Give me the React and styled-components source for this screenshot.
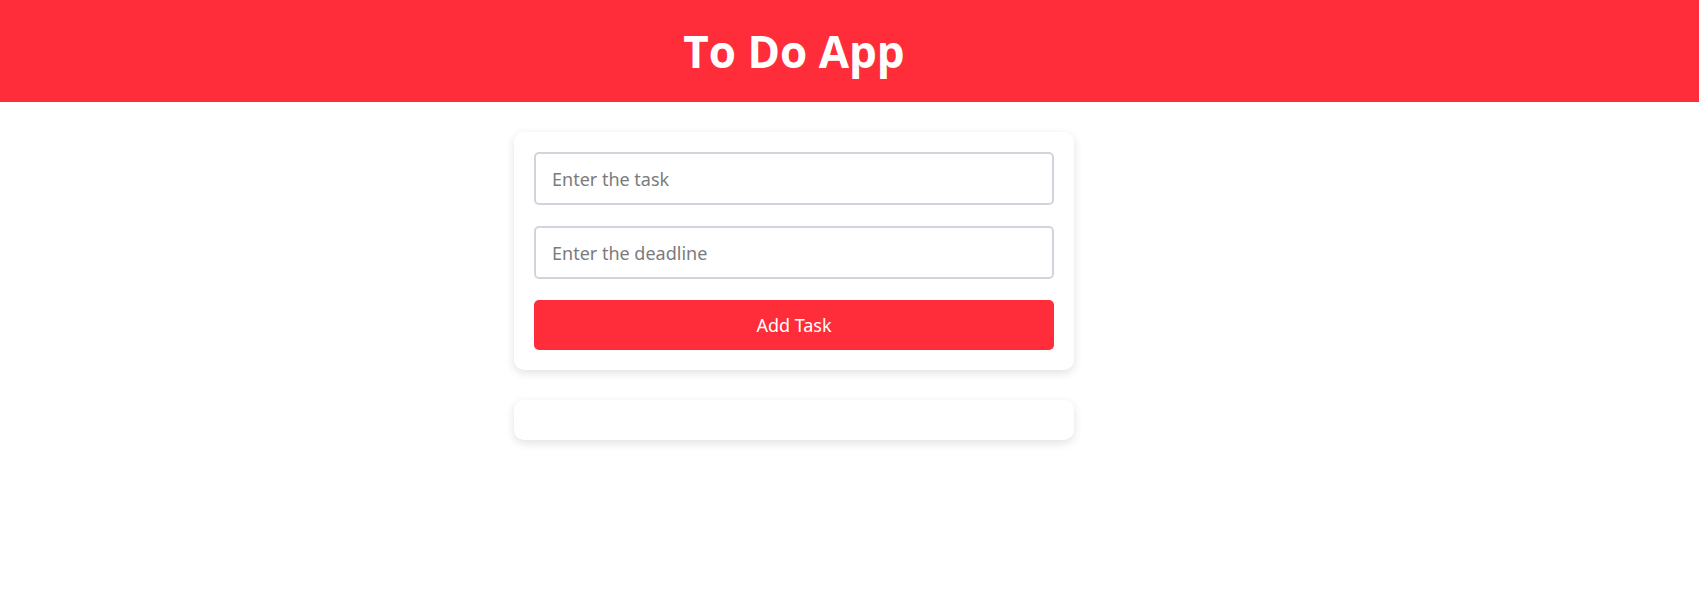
import React, { useState } from 'react';
import styled, { createGlobalStyle } from 'styled-components';

const GlobalStyle = createGlobalStyle`
  body {
    margin: 0;
    background: #ffffff;
    font-family: 'Noto Sans', 'Open Sans', sans-serif;
  }
`;

const Header = styled.header`
  background: #ff2d3a;
  height: 102px;
  padding-right: 111px;
  display: flex;
  align-items: center;
  justify-content: center;
`;

const Title = styled.h1`
  margin: 0;
  color: #ffffff;
  font-family: 'Open Sans', sans-serif;
  font-weight: 700;
  font-size: 44px;
`;

const Main = styled.main`
  padding: 30px 111px 30px 0;
  display: flex;
  flex-direction: column;
  align-items: center;
  gap: 30px;
`;

const Card = styled.div`
  width: 560px;
  box-sizing: border-box;
  background: #ffffff;
  border-radius: 10px;
  padding: 20px;
  min-height: 40px;
  box-shadow: 0 3px 10px rgba(0, 0, 0, 0.12);
`;

const Form = styled.form`
  display: flex;
  flex-direction: column;
  gap: 21px;
`;

const Input = styled.input`
  height: 53px;
  box-sizing: border-box;
  padding: 0 16px;
  border: 2px solid #d1d5db;
  border-radius: 5px;
  font-family: 'Noto Sans', sans-serif;
  font-size: 18px;
  color: #333;
  outline: none;

  &::placeholder {
    color: #7b7b7b;
  }
`;

const Button = styled.button`
  height: 50px;
  border: none;
  border-radius: 5px;
  background: #ff2d3a;
  color: #ffffff;
  font-family: 'Noto Sans', sans-serif;
  font-size: 18px;
  cursor: pointer;
`;

const TaskList = styled.ul`
  list-style: none;
  margin: 0;
  padding: 0;
`;

function App() {
  const [task, setTask] = useState('');
  const [deadline, setDeadline] = useState('');
  const [tasks, setTasks] = useState([]);

  const handleSubmit = e => {
    e.preventDefault();
    if (!task || !deadline) return;
    setTasks([...tasks, { id: Date.now(), task, deadline }]);
    setTask('');
    setDeadline('');
  };

  return (
    <>
      <GlobalStyle />
      <Header>
        <Title>To Do App</Title>
      </Header>
      <Main>
        <Card>
          <Form onSubmit={handleSubmit}>
            <Input
              placeholder="Enter the task"
              value={task}
              onChange={e => setTask(e.target.value)}
            />
            <Input
              placeholder="Enter the deadline"
              value={deadline}
              onChange={e => setDeadline(e.target.value)}
            />
            <Button type="submit">Add Task</Button>
          </Form>
        </Card>
        <Card>
          <TaskList>
            {tasks.map(t => (
              <li key={t.id}>{t.task} — {t.deadline}</li>
            ))}
          </TaskList>
        </Card>
      </Main>
    </>
  );
}

export default App;
